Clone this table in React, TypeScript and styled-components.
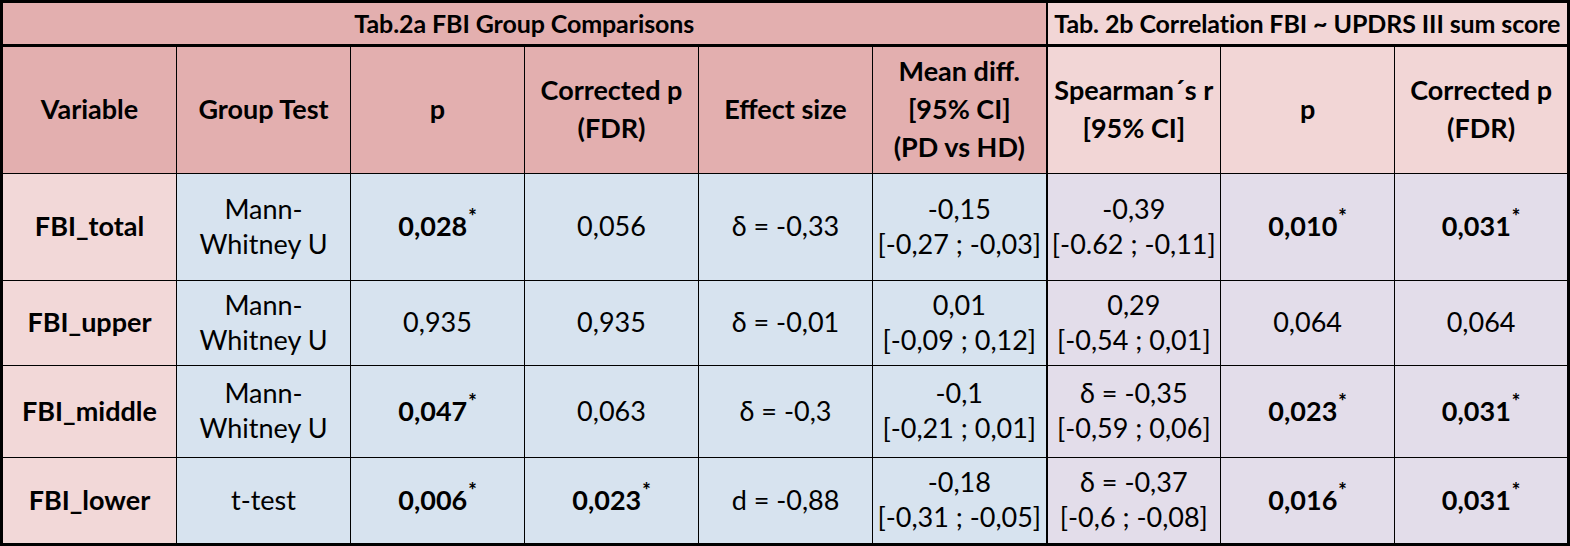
import React from "react";
import styled, { createGlobalStyle, css } from "styled-components";

const GlobalStyle = createGlobalStyle`
  html, body {
    margin: 0;
    padding: 0;
    background: #ffffff;
  }
  body {
    font-family: Lato, "Open Sans", sans-serif;
    color: #000;
  }
`;

type Tone = "groupHead" | "corrHead" | "variable" | "group" | "corr";

const tones: Record<Tone, string> = {
  groupHead: "#e3afaf",
  corrHead: "#f2d6d6",
  variable: "#f2d8d8",
  group: "#d7e3ef",
  corr: "#e3ddea",
};

const Table = styled.table`
  width: 1567px;
  table-layout: fixed;
  border-collapse: collapse;
  border: 3px solid #000;
`;

const cellBase = css<{ $tone: Tone; $split?: boolean }>`
  background: ${({ $tone }) => tones[$tone]};
  border: 1px solid #000;
  border-right: ${({ $split }) => ($split ? "2px solid #000" : "1px solid #000")};
  text-align: center;
  vertical-align: middle;
  padding: 0;
  white-space: nowrap;
`;

const TitleCell = styled.th<{ $tone: Tone; $split?: boolean }>`
  ${cellBase};
  border-bottom: 3px solid #000;
  font-size: 25px;
  font-weight: 700;
  height: 41px;
  line-height: 41px;
  letter-spacing: -0.1px;
`;

const HeadCell = styled.th<{ $tone: Tone; $split?: boolean }>`
  ${cellBase};
  font-size: 27px;
  font-weight: 700;
  line-height: 38px;
  padding-bottom: 2px;
`;

const Cell = styled.td<{ $tone: Tone; $split?: boolean; $bold?: boolean }>`
  ${cellBase};
  font-size: 27px;
  font-weight: ${({ $bold }) => ($bold ? 700 : 400)};
  line-height: 35px;
  padding-bottom: 3px;
`;

const Row = styled.tr<{ $h: number }>`
  height: ${({ $h }) => $h}px;
`;

// raised asterisk marking significant values
const Star = styled.sup`
  font-size: 20px;
  font-weight: 900;
  line-height: 0;
  vertical-align: 0.6em;
  margin-left: 1px;
`;

const Lines = ({ text }: { text: string }) => (
  <>
    {text.split("\n").map((line, i) => (
      <React.Fragment key={i}>
        {i > 0 && <br />}
        {line}
      </React.Fragment>
    ))}
  </>
);

type Val = { v: string; sig?: boolean };

const rows: {
  name: string;
  test: string;
  h: number;
  p: Val;
  pc: Val;
  effect: string;
  diff: string;
  r: string;
  rp: Val;
  rpc: Val;
}[] = [
  {
    name: "FBI_total",
    test: "Mann-\nWhitney U",
    h: 107,
    p: { v: "0,028", sig: true },
    pc: { v: "0,056" },
    effect: "δ = -0,33",
    diff: "-0,15\n[-0,27 ; -0,03]",
    r: "-0,39\n[-0.62 ; -0,11]",
    rp: { v: "0,010", sig: true },
    rpc: { v: "0,031", sig: true },
  },
  {
    name: "FBI_upper",
    test: "Mann-\nWhitney U",
    h: 85,
    p: { v: "0,935" },
    pc: { v: "0,935" },
    effect: "δ = -0,01",
    diff: "0,01\n[-0,09 ; 0,12]",
    r: "0,29\n[-0,54 ; 0,01]",
    rp: { v: "0,064" },
    rpc: { v: "0,064" },
  },
  {
    name: "FBI_middle",
    test: "Mann-\nWhitney U",
    h: 92,
    p: { v: "0,047", sig: true },
    pc: { v: "0,063" },
    effect: "δ = -0,3",
    diff: "-0,1\n[-0,21 ; 0,01]",
    r: "δ = -0,35\n[-0,59 ; 0,06]",
    rp: { v: "0,023", sig: true },
    rpc: { v: "0,031", sig: true },
  },
  {
    name: "FBI_lower",
    test: "t-test",
    h: 87,
    p: { v: "0,006", sig: true },
    pc: { v: "0,023", sig: true },
    effect: "d = -0,88",
    diff: "-0,18\n[-0,31 ; -0,05]",
    r: "δ = -0,37\n[-0,6 ; -0,08]",
    rp: { v: "0,016", sig: true },
    rpc: { v: "0,031", sig: true },
  },
];

const ValueCell = ({ val, tone }: { val: Val; tone: Tone }) => (
  <Cell $tone={tone} $bold={val.sig}>
    {val.v}
    {val.sig && <Star>*</Star>}
  </Cell>
);

export default function App() {
  return (
    <>
      <GlobalStyle />
      <Table>
        <colgroup>
          <col style={{ width: 175 }} />
          <col style={{ width: 174 }} />
          <col style={{ width: 174 }} />
          <col style={{ width: 174 }} />
          <col style={{ width: 174 }} />
          <col style={{ width: 174 }} />
          <col style={{ width: 174 }} />
          <col style={{ width: 174 }} />
          <col style={{ width: 174 }} />
        </colgroup>
        <thead>
          <tr>
            <TitleCell colSpan={6} $tone="groupHead" $split>
              Tab.2a FBI Group Comparisons
            </TitleCell>
            <TitleCell colSpan={3} $tone="corrHead">
              Tab. 2b Correlation FBI ~ UPDRS III sum score
            </TitleCell>
          </tr>
          <Row $h={128}>
            <HeadCell $tone="groupHead">Variable</HeadCell>
            <HeadCell $tone="groupHead">Group Test</HeadCell>
            <HeadCell $tone="groupHead">p</HeadCell>
            <HeadCell $tone="groupHead">
              <Lines text={"Corrected p\n(FDR)"} />
            </HeadCell>
            <HeadCell $tone="groupHead">Effect size</HeadCell>
            <HeadCell $tone="groupHead" $split>
              <Lines text={"Mean diff.\n[95% CI]\n(PD vs HD)"} />
            </HeadCell>
            <HeadCell $tone="corrHead">
              <Lines text={"Spearman´s r\n[95% CI]"} />
            </HeadCell>
            <HeadCell $tone="corrHead">p</HeadCell>
            <HeadCell $tone="corrHead">
              <Lines text={"Corrected p\n(FDR)"} />
            </HeadCell>
          </Row>
        </thead>
        <tbody>
          {rows.map((row) => (
            <Row key={row.name} $h={row.h}>
              <Cell $tone="variable" $bold>
                {row.name}
              </Cell>
              <Cell $tone="group">
                <Lines text={row.test} />
              </Cell>
              <ValueCell val={row.p} tone="group" />
              <ValueCell val={row.pc} tone="group" />
              <Cell $tone="group">{row.effect}</Cell>
              <Cell $tone="group" $split>
                <Lines text={row.diff} />
              </Cell>
              <Cell $tone="corr">
                <Lines text={row.r} />
              </Cell>
              <ValueCell val={row.rp} tone="corr" />
              <ValueCell val={row.rpc} tone="corr" />
            </Row>
          ))}
        </tbody>
      </Table>
    </>
  );
}
